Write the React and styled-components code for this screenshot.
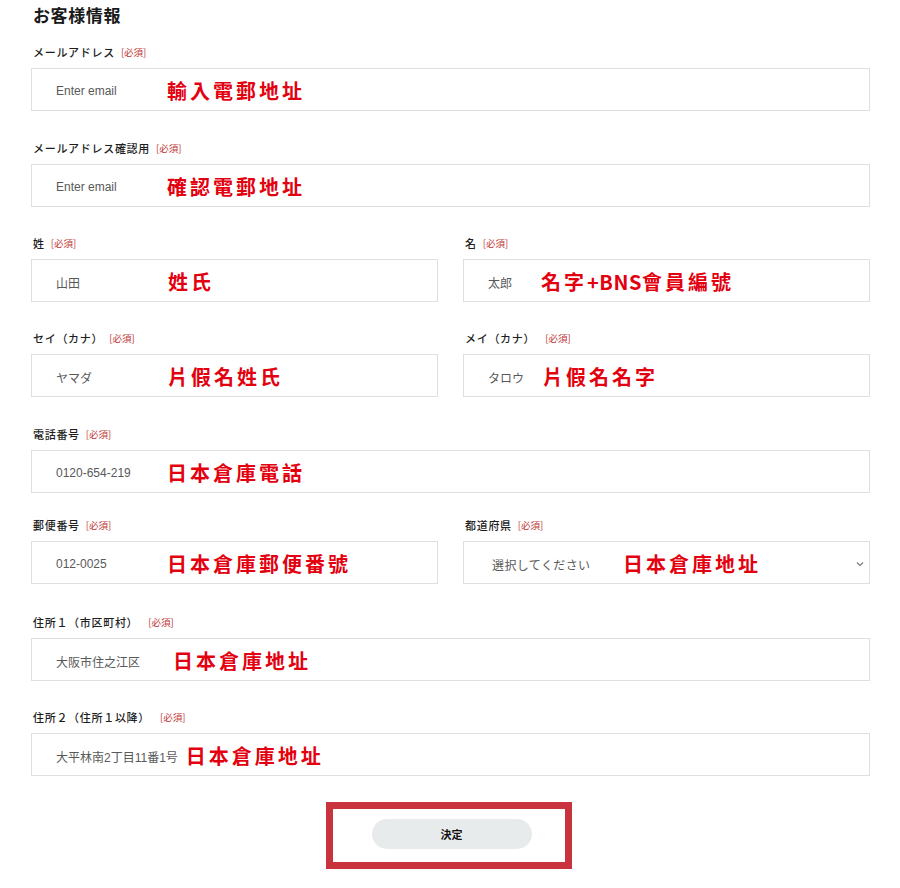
import React from "react";
import styled, { createGlobalStyle } from "styled-components";

const Global = createGlobalStyle`
  html, body { margin: 0; padding: 0; background: #fff; }
  body { font-family: "Liberation Sans", "Noto Sans CJK JP", sans-serif; color: #222; }
`;

const Page = styled.div`
  width: 900px;
  box-sizing: border-box;
  padding: 3px 30px 20px 31px;
`;

const Title = styled.h2`
  margin: 0 0 17px 2px;
  font-family: "Noto Sans CJK JP", sans-serif;
  font-size: 17px;
  line-height: 24px;
  font-weight: 700;
  letter-spacing: 0.6px;
  color: #1a1a1a;
`;

const Form = styled.div`
  display: flex;
  flex-direction: column;
`;

const Row = styled.div`
  display: grid;
  grid-template-columns: ${(p) => (p.$cols === 2 ? "1fr 1fr" : "1fr")};
  column-gap: 25px;
  margin-top: ${(p) => p.$mt ?? 0}px;
`;

const Field = styled.div`
  display: flex;
  flex-direction: column;
`;

const Label = styled.div`
  display: flex;
  align-items: center;
  height: 16px;
  margin: 0 0 8px 2px;
  font-family: "Noto Sans CJK JP", sans-serif;
  font-size: 11px;
  font-weight: 500;
  letter-spacing: 0.7px;
  color: #1e1e1e;
`;

const Required = styled.span`
  margin-left: ${(p) => p.$gap ?? 6}px;
  font-size: 9.5px;
  font-weight: 400;
  letter-spacing: 0;
  color: #c03434;
`;

const Box = styled.div`
  display: flex;
  align-items: center;
  height: 43px;
  box-sizing: border-box;
  border: 1px solid #dcdfe4;
  padding: 3px 3px 0 ${(p) => p.$pad ?? 24}px;
  background: #fff;
`;

const Placeholder = styled.span`
  flex: none;
  width: ${(p) => (p.$w ? `${p.$w}px` : "auto")};
  margin-right: ${(p) => (p.$w ? 0 : 8)}px;
  font-family: "Liberation Sans", "Noto Sans CJK JP", sans-serif;
  font-size: 12px;
  letter-spacing: ${(p) => p.$ls ?? 0}px;
  color: #595959;
  white-space: nowrap;
`;

const Note = styled.span`
  font-family: "Noto Sans CJK TC", sans-serif;
  font-size: 20px;
  font-weight: 700;
  letter-spacing: 3px;
  color: #e3000f;
  white-space: nowrap;
  line-height: 1;
`;

const Latin = styled.span`
  letter-spacing: 0.5px;
`;

const Chevron = styled.svg`
  margin-left: auto;
  margin-right: 2px;
  flex: none;
`;

const Footer = styled.div`
  display: flex;
  justify-content: center;
  margin-top: 26px;
`;

const Frame = styled.div`
  box-sizing: border-box;
  width: 246px;
  border: 7px solid #c8333d;
  padding: 10px 33px 13px 39px;
  margin-left: -4px;
`;

const Submit = styled.button`
  display: block;
  width: 160px;
  height: 30px;
  border: none;
  border-radius: 15px;
  background: #e8ebec;
  font-family: "Noto Sans CJK JP", sans-serif;
  font-size: 11px;
  font-weight: 700;
  color: #111;
  cursor: pointer;
`;

function Input({ label, reqGap, placeholder, w, note, pad, ls, select }) {
  return (
    <Field>
      <Label>
        {label}
        <Required $gap={reqGap}>[必須]</Required>
      </Label>
      <Box $pad={pad}>
        <Placeholder $w={w} $ls={ls}>{placeholder}</Placeholder>
        <Note>{note}</Note>
        {select && (
          <Chevron width="8" height="6" viewBox="0 0 8 6">
            <path d="M1 1.5 L4 4.5 L7 1.5" fill="none" stroke="#777" strokeWidth="1.1" />
          </Chevron>
        )}
      </Box>
    </Field>
  );
}

export default function App() {
  return (
    <>
      <Global />
      <Page>
        <Title>お客様情報</Title>
        <Form>
          <Row>
            <Input label="メールアドレス" placeholder="Enter email" w={111} note="輸入電郵地址" />
          </Row>
          <Row $mt={29}>
            <Input label="メールアドレス確認用" placeholder="Enter email" w={111} note="確認電郵地址" />
          </Row>
          <Row $cols={2} $mt={28}>
            <Input label="姓" placeholder="山田" w={112} note="姓氏" />
            <Input
              label="名"
              placeholder="太郎"
              w={53}
              note={
                <>
                  名字<Latin>+BNS</Latin>會員編號
                </>
              }
            />
          </Row>
          <Row $cols={2} $mt={28}>
            <Input label="セイ（カナ）" placeholder="ヤマダ" w={112} note="片假名姓氏" />
            <Input label="メイ（カナ）" reqGap={10} placeholder="タロウ" w={55} note="片假名名字" />
          </Row>
          <Row $mt={29}>
            <Input label="電話番号" placeholder="0120-654-219" w={111} note="日本倉庫電話" />
          </Row>
          <Row $cols={2} $mt={24}>
            <Input label="郵便番号" placeholder="012-0025" w={111} note="日本倉庫郵便番號" />
            <Input label="都道府県" placeholder="選択してください" w={131} pad={28} ls={0.4} note="日本倉庫地址" select />
          </Row>
          <Row $mt={30}>
            <Input label="住所１（市区町村）" reqGap={10} placeholder="大阪市住之江区" w={117} note="日本倉庫地址" />
          </Row>
          <Row $mt={28}>
            <Input label="住所２（住所１以降）" reqGap={10} placeholder="大平林南2丁目11番1号" note="日本倉庫地址" />
          </Row>
        </Form>
        <Footer>
          <Frame>
            <Submit type="button">決定</Submit>
          </Frame>
        </Footer>
      </Page>
    </>
  );
}
